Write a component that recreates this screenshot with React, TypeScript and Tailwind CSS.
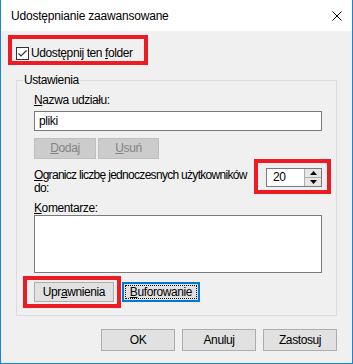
import React from "react";

function Checkbox() {
  return (
    <div className="w-[13px] h-[13px] border border-[#333333] bg-white flex items-center justify-center">
      <svg width="11" height="11" viewBox="0 0 11 11">
        <path d="M1.5 5.5 L4 8 L9.5 2.5" fill="none" stroke="#333333" strokeWidth="1.2" />
      </svg>
    </div>
  );
}

function Btn({ children, w, h = 21, disabled = false }: { children: React.ReactNode; w: number; h?: number; disabled?: boolean }) {
  return (
    <div
      style={{ width: w, height: h }}
      className={
        disabled
          ? "flex items-center justify-center border border-[#bfbfbf] bg-[#cccccc] text-[#838383] leading-[15px]"
          : "flex items-center justify-center border border-[#adadad] bg-[#e1e1e1] leading-[15px]"
      }
    >
      {children}
    </div>
  );
}

export default function App() {
  return (
    <div className="relative w-[353px] h-[364px] bg-[#f0f0f0] border-x border-b border-[#1883d7] text-[12px] tracking-[-0.4px] text-black font-['Liberation_Sans',Arial,sans-serif] overflow-hidden">
      <div className="h-[31px] bg-white flex items-center justify-between pl-[10px] pr-[10px]">
        <span className="leading-[16px] mt-[1px] tracking-[-0.2px]">Udostępnianie zaawansowane</span>
        <svg width="10" height="10" viewBox="0 0 10 10">
          <path d="M0.5 0.5L9.5 9.5M9.5 0.5L0.5 9.5" stroke="#000" strokeWidth="1" />
        </svg>
      </div>
      <div className="px-[15px] pt-[16px]">
        <div className="flex items-center h-[13px]">
          <Checkbox />
          <span className="ml-[2px] leading-[13px]">
            Udostępnij ten <u>f</u>older
          </span>
        </div>
        <div className="relative mt-[20px] border border-[#dcdcdc] pl-[17px] pr-[14px] pt-[12px] pb-[13px]">
          <span className="absolute left-[6px] top-[-8px] px-[1px] bg-[#f0f0f0] leading-[14px]">Ustawienia</span>
          <div className="leading-[15px]">
            <u>N</u>azwa udziału:
          </div>
          <div className="mt-[3px] h-[20px] border border-[#7a7a7a] bg-white flex items-center pl-[4px] leading-[15px]">pliki</div>
          <div className="mt-[7px] flex gap-[2px]">
            <Btn w={62} disabled>
              <u>D</u>odaj
            </Btn>
            <Btn w={61} disabled>
              <u>U</u>suń
            </Btn>
          </div>
          <div className="mt-[9px] flex justify-between items-start">
            <div className="pt-[1px] leading-[13px] whitespace-nowrap tracking-[-0.7px]">
              <u>O</u>granicz liczbę jednoczesnych użytkowników
              <br />
              do:
            </div>
            <div className="w-[56px] h-[19px] border border-[#7a7a7a] bg-white flex shrink-0">
              <div className="flex-1 flex items-center pl-[6px] leading-[15px]">20</div>
              <div className="w-[17px] flex flex-col border-l border-[#adadad]">
                <div className="flex-1 bg-[#e6e6e6] border-b border-[#adadad] flex items-center justify-center">
                  <svg width="7" height="4" viewBox="0 0 7 4">
                    <path d="M0 4L3.5 0L7 4Z" fill="#000" />
                  </svg>
                </div>
                <div className="flex-1 bg-[#e6e6e6] flex items-center justify-center">
                  <svg width="7" height="4" viewBox="0 0 7 4">
                    <path d="M0 0L3.5 4L7 0Z" fill="#000" />
                  </svg>
                </div>
              </div>
            </div>
          </div>
          <div className="mt-[7px] leading-[13px]">
            <u>K</u>omentarze:
          </div>
          <div className="h-[58px] border border-[#7a7a7a] bg-white" />
          <div className="mt-[9px] flex gap-[8px]">
            <Btn w={80} h={20}>
              Upr<u>a</u>wnienia
            </Btn>
            <div className="w-[78px] h-[20px] border-2 border-[#0078d7] bg-[#e1e1e1] p-[1px] flex">
              <div className="flex-1 border border-dotted border-black flex items-center justify-center leading-[15px]">
                <span>
                  <u>B</u>uforowanie
                </span>
              </div>
            </div>
          </div>
        </div>
        <div className="mt-[13px] flex justify-end gap-[7px]">
          <Btn w={74} h={22}>OK</Btn>
          <Btn w={74} h={22}>Anuluj</Btn>
          <Btn w={74} h={22}>Zastosuj</Btn>
        </div>
      </div>

      <div className="absolute left-[7px] top-[35px] w-[140px] h-[30px] border-4 border-[#ed1c24]" />
      <div className="absolute left-[253px] top-[159px] w-[77px] h-[35px] border-4 border-[#ed1c24]" />
      <div className="absolute left-[22px] top-[276px] w-[98px] h-[32px] border-4 border-[#ed1c24]" />
    </div>
  );
}
